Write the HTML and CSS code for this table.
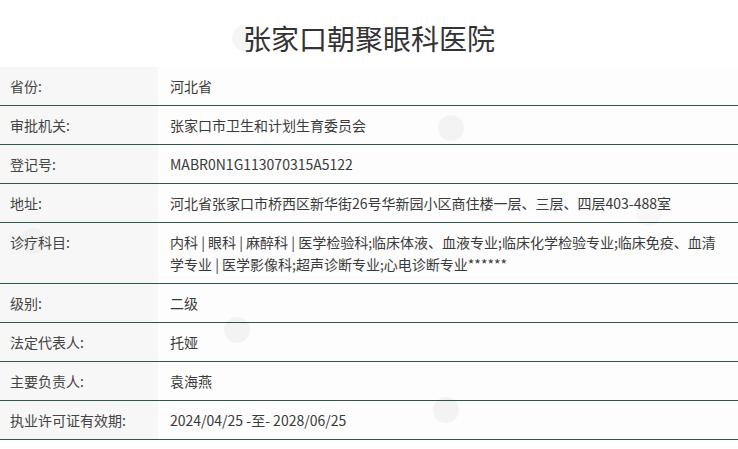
FILE: index.html
```
<!DOCTYPE html>
<html lang="zh-CN">
<head>
  <meta charset="UTF-8">
  <title>张家口朝聚眼科医院</title>
  <link rel="stylesheet" href="styles.css">
</head>
<body>
  <div class="page">
    <h1 class="title">张家口朝聚眼科医院</h1>

    <table class="info-table">
      <tr><td class="label">省份:</td><td class="value">河北省</td></tr>
      <tr><td class="label">审批机关:</td><td class="value">张家口市卫生和计划生育委员会</td></tr>
      <tr><td class="label">登记号:</td><td class="value">MABR0N1G113070315A5122</td></tr>
      <tr><td class="label">地址:</td><td class="value">河北省张家口市桥西区新华街26号华新园小区商住楼一层、三层、四层403-488室</td></tr>
      <tr><td class="label">诊疗科目:</td><td class="value">内科 | 眼科 | 麻醉科 | 医学检验科;临床体液、血液专业;临床化学检验专业;临床免疫、血清学专业 | 医学影像科;超声诊断专业;心电诊断专业******</td></tr>
      <tr><td class="label">级别:</td><td class="value">二级</td></tr>
      <tr><td class="label">法定代表人:</td><td class="value">托娅</td></tr>
      <tr><td class="label">主要负责人:</td><td class="value">袁海燕</td></tr>
      <tr><td class="label">执业许可证有效期:</td><td class="value">2024/04/25 -至- 2028/06/25</td></tr>
    </table>

    <!-- faint watermark dots -->
    <span class="mark" style="left:232px;top:25px"></span>
    <span class="mark" style="left:438px;top:115px"></span>
    <span class="mark faint" style="left:636px;top:200px"></span>
    <span class="mark" style="left:224px;top:317px"></span>
    <span class="mark" style="left:433px;top:397px"></span>
    <span class="mark faint" style="left:20px;top:228px"></span>
  </div>
</body>
</html>
```

FILE: styles.css
```
* {
  box-sizing: border-box;
}
body {
  margin: 0;
  background: #fff;
  font-family: "Noto Sans CJK SC", "Microsoft YaHei", sans-serif;
  color: #333;
}
.page {
  position: relative;
  width: 738px;
}
.title {
  margin: 0;
  padding: 18px 0 9px;
  font-size: 28px;
  line-height: 40px;
  font-weight: normal;
  text-align: center;
  color: #333;
}
.info-table {
  width: 100%;
  border-collapse: collapse;
  font-size: 14px;
  line-height: 22px;
}
.info-table td {
  padding: 8px 0;
  border-bottom: 1px solid #2d5844;
  vertical-align: top;
}
.label {
  width: 158px;
  padding-left: 10px !important;
  background: #f7f7f7;
  color: #444;
}
.value {
  padding-left: 12px !important;
  padding-right: 10px !important;
  background: #fdfdfd;
  color: #3a3a3a;
}
.mark {
  position: absolute;
  width: 26px;
  height: 26px;
  border-radius: 50%;
  background: rgba(0, 0, 0, 0.04);
}
.mark.faint {
  background: rgba(0, 0, 0, 0.025);
}
```
